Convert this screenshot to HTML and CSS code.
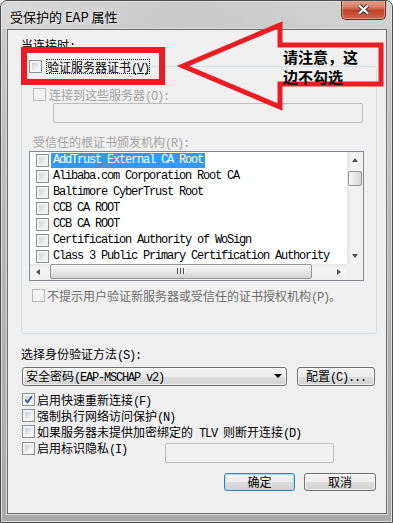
FILE: index.html
```html
<!DOCTYPE html>
<html>
<head>
  <meta charset="utf-8">
  <title>受保护的 EAP 属性</title>
  <link rel="stylesheet" href="styles.css">
</head>
<body>
  <div class="window">
    <div class="titlebar">
      <span class="title">受保护的 EAP 属性</span>
      <div class="close">
        <svg width="13" height="11" viewBox="0 0 13 11">
          <path d="M2 1.5 L11 9.5 M11 1.5 L2 9.5" stroke="#3b3b3b" stroke-width="4.2" fill="none"/>
          <path d="M2 1.5 L11 9.5 M11 1.5 L2 9.5" stroke="#fff" stroke-width="2.2" fill="none"/>
        </svg>
      </div>
    </div>

    <div class="frame">
      <div class="client">
        <div class="lbl">当连接时<span class="latin">:</span></div>

        <fieldset class="group">
          <legend>
            <span class="legend-check">
              <span class="cb"></span>
              <span class="focus">验证服务器证书<span class="latin">(<u>V</u>)</span></span>
            </span>
          </legend>

          <div class="check off servers-check"><span class="cb dis"></span><span class="txt">连接到这些服务器<span class="latin">(O):</span></span></div>
          <div class="field servers"></div>

          <div class="lbl off roots-label">受信任的根证书颁发机构<span class="latin">(R):</span></div>
          <div class="list">
            <div class="rows">
              <div class="row"><span class="cb"></span><span class="item selected">AddTrust External CA Root</span></div>
              <div class="row"><span class="cb"></span><span class="item">Alibaba.com Corporation Root CA</span></div>
              <div class="row"><span class="cb"></span><span class="item">Baltimore CyberTrust Root</span></div>
              <div class="row"><span class="cb"></span><span class="item">CCB CA ROOT</span></div>
              <div class="row"><span class="cb"></span><span class="item">CCB CA ROOT</span></div>
              <div class="row"><span class="cb"></span><span class="item">Certification Authority of WoSign</span></div>
              <div class="row"><span class="cb"></span><span class="item">Class 3 Public Primary Certification Authority</span></div>
            </div>
            <div class="vscroll">
              <div class="sbtn"><span class="tri up"></span></div>
              <div class="vtrack"><div class="vthumb"></div></div>
              <div class="sbtn"><span class="tri down"></span></div>
            </div>
            <div class="hscroll">
              <div class="sbtn"><span class="tri left"></span></div>
              <div class="htrack"><div class="hthumb"><span class="grip"></span></div></div>
              <div class="sbtn"><span class="tri right"></span></div>
            </div>
            <div class="corner"></div>
          </div>

          <div class="check off2 noprompt"><span class="cb dis"></span><span class="txt">不提示用户验证新服务器或受信任的证书授权机构<span class="latin">(P)</span>。</span></div>
        </fieldset>

        <div class="lbl method-label">选择身份验证方法<span class="latin">(S):</span></div>
        <div class="combo-row">
          <div class="combo"><span class="txt">安全密码<span class="latin">(EAP-MSCHAP v2)</span></span><span class="tri down dark"></span></div>
          <button class="btn config">配置<span class="latin">(C)...</span></button>
        </div>

        <div class="options">
          <div class="check opt">
            <span class="cb">
              <svg width="9" height="9" viewBox="0 0 9 9"><path d="M1.2 4.6 L3.5 7.2 L7.8 1.4" stroke="#41598f" stroke-width="1.9" fill="none"/></svg>
            </span>
            <span class="txt">启用快速重新连接<span class="latin">(F)</span></span>
          </div>
          <div class="check opt"><span class="cb"></span><span class="txt">强制执行网络访问保护<span class="latin">(N)</span></span></div>
          <div class="check opt"><span class="cb"></span><span class="txt">如果服务器未提供加密绑定的<span class="latin"> TLV </span>则断开连接<span class="latin">(D)</span></span></div>
          <div class="check opt privacy"><span class="cb"></span><span class="txt">启用标识隐私<span class="latin">(I)</span></span><span class="field ident"></span></div>
        </div>

        <div class="actions">
          <button class="btn default">确定</button>
          <button class="btn">取消</button>
        </div>
      </div>
    </div>

    <svg class="callout" width="393" height="523" viewBox="0 0 393 523">
      <rect x="24" y="50" width="138" height="32" fill="none" stroke="#ed1c24" stroke-width="6"/>
      <polygon points="183,66 280,25 280,45 381,45 381,84 280,84 280,107" fill="none" stroke="#ed1c24" stroke-width="5"/>
    </svg>
    <div class="note">请注意，这<br>边不勾选</div>
  </div>
</body>
</html>
```

FILE: styles.css
```css
* {
  box-sizing: border-box;
}

body {
  margin: 0;
  background: #fff;
  font-family: "Noto Sans CJK SC", "Liberation Sans", sans-serif;
  font-size: 12px;
  color: #000;
}

.window {
  position: relative;
  width: 393px;
  height: 523px;
  border: 1px solid #4d4d4d;
  border-radius: 7px 7px 0 0;
  background: linear-gradient(180deg, #cbcbcb 0%, #bababa 40%, #a9a9a9 100%);
  box-shadow: inset 0 0 0 1px #dedede;
  display: flex;
  flex-direction: column;
  overflow: hidden;
}

.titlebar {
  height: 28px;
  flex: none;
  display: flex;
  justify-content: space-between;
  align-items: flex-start;
  padding: 0 6px 0 9px;
  background: linear-gradient(90deg, rgba(255,255,255,0.25), rgba(255,255,255,0) 45%, rgba(255,255,255,0.15));
}

.title {
  padding-top: 7px;
  font-size: 13px;
  line-height: 17px;
  text-shadow: 0 0 6px rgba(255,255,255,0.9);
}

.close {
  width: 45px;
  height: 20px;
  margin-top: -1px;
  border: 1px solid #6a2a22;
  border-top: none;
  border-radius: 0 0 5px 5px;
  background: linear-gradient(180deg, #e7a595 0%, #d7785f 40%, #c2402a 55%, #d2654b 100%);
  box-shadow: inset 0 0 0 1px rgba(255,210,200,0.45);
  display: flex;
  align-items: center;
  justify-content: center;
}

.frame {
  flex: 1;
  display: flex;
  padding: 0 5px 8px 6px;
}

.client {
  flex: 1;
  display: flex;
  flex-direction: column;
  align-items: flex-start;
  background: #f0f0f0;
  border: 1px solid #6f6f6f;
  box-shadow: 0 0 0 1px #d6d6d6;
  padding: 8px 9px 0 13px;
}

.lbl {
  height: 14px;
  line-height: 14px;
  white-space: nowrap;
}

.off {
  color: #a3a3a3;
}

.off2 {
  color: #6d6d6d;
}

/* group box */
.group {
  align-self: stretch;
  margin: 6px 0 0;
  min-width: 0;
  border: 1px solid #d5dfe5;
  border-radius: 3px;
  padding: 12px 0 30px 11px;
}

.group legend {
  margin-left: -5px;
  padding: 0 1px;
}

.legend-check {
  display: inline-flex;
  align-items: center;
  gap: 4px;
  height: 16px;
}

.focus {
  line-height: 15px;
  padding: 0 1px;
  outline: 1px dotted #222;
  outline-offset: -1px;
}

.check {
  display: flex;
  align-items: center;
  gap: 3px;
  height: 14px;
  white-space: nowrap;
}

.txt {
  line-height: 14px;
}

/* checkbox */
.cb {
  flex: none;
  width: 13px;
  height: 13px;
  border: 1px solid #8e8f8f;
  padding: 2px;
  background: linear-gradient(135deg, #c9cdd3 0%, #eef0f2 70%, #f8f8f8 100%) content-box, #f4f4f4;
  display: inline-flex;
  align-items: center;
  justify-content: center;
}

.cb svg {
  margin: -2px;
}

.cb.dis {
  border-color: #b8b8b8;
  background: #f4f4f4;
}

.field {
  height: 20px;
  border: 1px solid #bdbdbd;
  border-radius: 2px;
  background: #f0f0f0;
}

.servers {
  width: 310px;
  margin: 1px 0 0 20px;
}

.roots-label {
  margin-top: 12px;
}

/* certificate list */
.list {
  width: 335px;
  height: 130px;
  margin: 2px 0 0 -4px;
  border: 1px solid #828790;
  background: #fff;
  display: grid;
  grid-template-columns: 1fr 16px;
  grid-template-rows: 112px 16px;
}

.rows {
  overflow: hidden;
  padding-top: 1px;
}

.row {
  height: 16px;
  display: flex;
  align-items: center;
  padding-left: 6px;
  white-space: nowrap;
}

.item {
  margin-left: 2px;
  padding: 0 2px;
  font-family: "Liberation Mono", monospace;
  font-size: 12px;
  letter-spacing: -1.2px;
  line-height: 15px;
}

.item.selected {
  background: #3399ff;
  color: #fff;
}

.latin {
  font-family: "Liberation Mono", monospace;
  font-size: 12px;
  letter-spacing: -1.2px;
  line-height: 0;
  white-space: pre;
}

.vscroll {
  display: flex;
  flex-direction: column;
  background: linear-gradient(90deg, #e6e6e6, #f4f4f4 30%, #f1f1f1);
}

.hscroll {
  display: flex;
  background: linear-gradient(180deg, #e6e6e6, #f4f4f4 30%, #f1f1f1);
}

.corner {
  background: #f0f0f0;
}

.sbtn {
  width: 16px;
  height: 16px;
  flex: none;
  display: flex;
  align-items: center;
  justify-content: center;
}

.vtrack {
  flex: 1;
  padding: 3px 1px 0 1px;
}

.vthumb {
  height: 15px;
  border: 1px solid #959595;
  border-radius: 2px;
  background: linear-gradient(90deg, #f6f6f6, #e6e6e6 50%, #d5d5d5);
}

.htrack {
  flex: 1;
  padding: 0 0 1px 4px;
  display: flex;
}

.hthumb {
  width: 262px;
  border: 1px solid #959595;
  border-radius: 2px;
  background: linear-gradient(180deg, #f6f6f6, #e8e8e8 50%, #d3d3d3);
  display: flex;
  align-items: center;
  justify-content: center;
}

.grip {
  width: 8px;
  height: 6px;
  background: repeating-linear-gradient(90deg, #4a4a4a 0 1px, #f0f0f0 1px 3px);
}

.tri {
  width: 0;
  height: 0;
}

.tri.up {
  border-left: 3px solid transparent;
  border-right: 3px solid transparent;
  border-bottom: 4px solid #4f4f4f;
}

.tri.down {
  border-left: 3px solid transparent;
  border-right: 3px solid transparent;
  border-top: 4px solid #4f4f4f;
}

.tri.left {
  border-top: 3px solid transparent;
  border-bottom: 3px solid transparent;
  border-right: 4px solid #4f4f4f;
}

.tri.right {
  border-top: 3px solid transparent;
  border-bottom: 3px solid transparent;
  border-left: 4px solid #4f4f4f;
}

.tri.dark {
  border-left-width: 4px;
  border-right-width: 4px;
  border-top-color: #000;
}

.noprompt {
  margin: 8px 0 0 -1px;
  gap: 2px;
}

.method-label {
  margin-top: 13px;
}

.combo-row {
  margin: 6px 0 0 1px;
  display: flex;
  gap: 10px;
}

.combo,
.btn {
  height: 19px;
  border: 1px solid #707070;
  border-radius: 3px;
  background: linear-gradient(180deg, #f4f4f4 0%, #ececec 50%, #dedede 50%, #d2d2d2 100%);
  box-shadow: inset 0 0 0 1px rgba(255,255,255,0.7);
  font-family: inherit;
  font-size: 12px;
  color: #000;
  line-height: 16px;
}

.combo {
  width: 265px;
  padding: 0 0 0 3px;
  display: flex;
  align-items: center;
  white-space: nowrap;
}

.combo .tri {
  margin-left: auto;
  margin-right: 4px;
}

.btn {
  padding: 0;
}

.config {
  width: 78px;
}

.options {
  margin: 6px 0 0 1px;
  align-self: stretch;
}

.opt {
  height: 16px;
  gap: 2px;
}

.privacy {
  height: 23px;
  align-items: flex-start;
  padding-top: 2px;
}

.privacy .txt {
  margin-top: -1px;
}

.ident {
  width: 169px;
  margin: 1px 43px 0 auto;
}

.actions {
  align-self: stretch;
  margin-top: 10px;
  padding-right: 1px;
  display: flex;
  justify-content: flex-end;
  gap: 9px;
}

.actions .btn {
  width: 72px;
  height: 18px;
}

.btn.default {
  width: 71px;
  border-color: #3c7fb1;
  box-shadow: inset 0 0 0 1px #a9dcf6;
}

/* red annotation drawn over the dialog */
.callout {
  position: absolute;
  left: -1px;
  top: -1px;
  pointer-events: none;
}

.note {
  position: absolute;
  left: 282px;
  top: 46px;
  font-size: 15px;
  font-weight: bold;
  line-height: 20px;
}
```
